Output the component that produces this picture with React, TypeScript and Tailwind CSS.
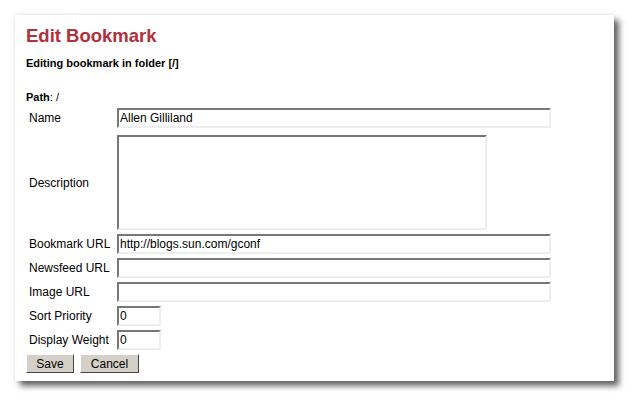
const fieldClass =
  'h-[20px] border-2 border-t-[#777] border-l-[#777] border-b-[#eee] border-r-[#eee] bg-white px-[1px] text-[12px] text-black outline-none';

const Row = ({ label, children, className = '' }: { label: string; children: React.ReactNode; className?: string }) => (
  <div className={`flex items-center ${className}`}>
    <div className="w-[91px] shrink-0 pl-[3px] text-[12px]">{label}</div>
    {children}
  </div>
);

const App = () => {
  return (
    <div className="h-[407px] w-[639px] bg-white pl-[15px] pt-[15px] font-['Liberation_Sans',Arial,sans-serif] text-black">
      <div className="h-[366px] w-[599px] bg-white pl-[11px] pt-[10px] shadow-[5px_5px_6px_rgba(0,0,0,0.6),0_0_4px_rgba(0,0,0,0.12)]">
        <h1 className="text-[18.5px] font-bold leading-[22px] text-[#b0303c]">Edit Bookmark</h1>
        <div className="mt-[10px] text-[11px] font-bold leading-[13px]">Editing bookmark in folder [/]</div>
        <div className="mt-[21px] text-[11px] leading-[13px]">
          <span className="font-bold">Path</span>: /
        </div>
        <div className="mt-[4px] flex flex-col gap-[4px]">
          <Row label="Name">
            <input className={`${fieldClass} w-[434px]`} defaultValue="Allen Gilliland" />
          </Row>
          <Row label="Description" className="mt-[3px]">
            <textarea className={`${fieldClass} block h-[95px] w-[370px] resize-none`} />
          </Row>
          <Row label="Bookmark URL">
            <input className={`${fieldClass} w-[434px]`} defaultValue="http://blogs.sun.com/gconf" />
          </Row>
          <Row label="Newsfeed URL">
            <input className={`${fieldClass} w-[434px]`} />
          </Row>
          <Row label="Image URL">
            <input className={`${fieldClass} w-[434px]`} />
          </Row>
          <Row label="Sort Priority">
            <input className={`${fieldClass} w-[44px]`} defaultValue="0" />
          </Row>
          <Row label="Display Weight">
            <input className={`${fieldClass} w-[44px]`} defaultValue="0" />
          </Row>
          <div className="flex gap-[6px]">
            <button className="h-[19px] w-[48px] border border-b-[#444] border-l-[#fff] border-r-[#444] border-t-[#fff] bg-[#d4d0c8] text-[12px] leading-[16px]">
              Save
            </button>
            <button className="h-[19px] w-[59px] border border-b-[#444] border-l-[#fff] border-r-[#444] border-t-[#fff] bg-[#d4d0c8] text-[12px] leading-[16px]">
              Cancel
            </button>
          </div>
        </div>
      </div>
    </div>
  );
};

export default App;
